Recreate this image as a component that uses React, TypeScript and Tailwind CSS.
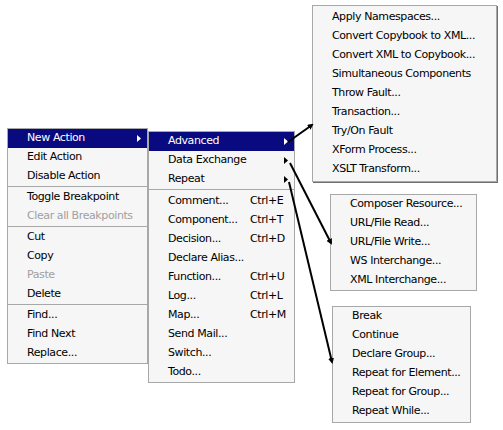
import React from 'react';

type Item =
  | { sep: true }
  | {
      label: string;
      shortcut?: string;
      arrow?: boolean;
      selected?: boolean;
      disabled?: boolean;
    };

const SEP: Item = { sep: true };

const mainMenu: Item[] = [
  { label: 'New Action', arrow: true, selected: true },
  { label: 'Edit Action' },
  { label: 'Disable Action' },
  SEP,
  { label: 'Toggle Breakpoint' },
  { label: 'Clear all Breakpoints', disabled: true },
  SEP,
  { label: 'Cut' },
  { label: 'Copy' },
  { label: 'Paste', disabled: true },
  { label: 'Delete' },
  SEP,
  { label: 'Find...' },
  { label: 'Find Next' },
  { label: 'Replace...' },
];

const actionMenu: Item[] = [
  { label: 'Advanced', arrow: true, selected: true },
  { label: 'Data Exchange', arrow: true },
  { label: 'Repeat', arrow: true },
  SEP,
  { label: 'Comment...', shortcut: 'Ctrl+E' },
  { label: 'Component...', shortcut: 'Ctrl+T' },
  { label: 'Decision...', shortcut: 'Ctrl+D' },
  { label: 'Declare Alias...' },
  { label: 'Function...', shortcut: 'Ctrl+U' },
  { label: 'Log...', shortcut: 'Ctrl+L' },
  { label: 'Map...', shortcut: 'Ctrl+M' },
  { label: 'Send Mail...' },
  { label: 'Switch...' },
  { label: 'Todo...' },
];

const advancedMenu: Item[] = [
  { label: 'Apply Namespaces...' },
  { label: 'Convert Copybook to XML...' },
  { label: 'Convert XML to Copybook...' },
  { label: 'Simultaneous Components' },
  { label: 'Throw Fault...' },
  { label: 'Transaction...' },
  { label: 'Try/On Fault' },
  { label: 'XForm Process...' },
  { label: 'XSLT Transform...' },
];

const exchangeMenu: Item[] = [
  { label: 'Composer Resource...' },
  { label: 'URL/File Read...' },
  { label: 'URL/File Write...' },
  { label: 'WS Interchange...' },
  { label: 'XML Interchange...' },
];

const repeatMenu: Item[] = [
  { label: 'Break' },
  { label: 'Continue' },
  { label: 'Declare Group...' },
  { label: 'Repeat for Element...' },
  { label: 'Repeat for Group...' },
  { label: 'Repeat While...' },
];

const Arrow = ({ white }: { white?: boolean }) => (
  <svg width="4" height="7" viewBox="0 0 4 7" className="shrink-0">
    <path d="M0 0 L4 3.5 L0 7 Z" fill={white ? '#ffffff' : '#000000'} />
  </svg>
);

const Menu = ({
  items,
  className,
  sepClass = 'h-[2px]',
}: {
  items: Item[];
  className: string;
  sepClass?: string;
}) => (
  <div className={`absolute bg-[#f6f6f6] border border-[#a8a8a8] ${className}`}>
    {items.map((it, i) => {
      if ('sep' in it) {
        return <div key={i} className={`${sepClass} border-t border-[#a8a8a8]`} />;
      }
      return (
        <div
          key={i}
          className={`h-[19px] flex items-center pl-[19px] pr-[6px] ${
            it.selected ? 'bg-[#0a0a80] text-white' : it.disabled ? 'text-[#a0a0a0]' : 'text-black'
          }`}
        >
          <span className="flex-1 whitespace-nowrap">{it.label}</span>
          {it.shortcut && <span className="w-[38px] whitespace-nowrap">{it.shortcut}</span>}
          {it.arrow && <Arrow white={it.selected} />}
        </div>
      );
    })}
  </div>
);

export default function App() {
  return (
    <div
      className="relative w-[503px] h-[430px] bg-white overflow-hidden text-[11px] tracking-[-0.4px]"
      style={{ fontFamily: '"DejaVu Sans", Verdana, sans-serif' }}
    >
      <Menu items={mainMenu} className="left-[7px] top-[128px] w-[141px]" />
      <Menu items={actionMenu} sepClass="h-[3px]" className="left-[148px] top-[131px] w-[147px]" />
      <Menu
        items={advancedMenu}
        className="left-[312px] top-[5px] w-[185px] h-[177px] shadow-[1px_1px_0_#707070] pt-[2px]"
      />
      <Menu items={exchangeMenu} className="left-[330px] top-[194px] w-[147px] h-[97px]" />
      <Menu items={repeatMenu} className="left-[332px] top-[306px] w-[139px] h-[117px]" />

      {/* connector lines */}
      <svg className="absolute inset-0 pointer-events-none" width="503" height="430">
        <defs>
          <marker id="head" markerWidth="3" markerHeight="3" refX="2" refY="1.5" orient="auto">
            <path d="M0 0 L3 1.5 L0 3 Z" fill="#000" />
          </marker>
        </defs>
        <line x1="288" y1="142" x2="312" y2="125" stroke="#000" strokeWidth="2" markerEnd="url(#head)" />
        <line x1="290" y1="163" x2="331" y2="243" stroke="#000" strokeWidth="2" markerEnd="url(#head)" />
        <line x1="289" y1="182" x2="332" y2="362" stroke="#000" strokeWidth="2" markerEnd="url(#head)" />
      </svg>
    </div>
  );
}
